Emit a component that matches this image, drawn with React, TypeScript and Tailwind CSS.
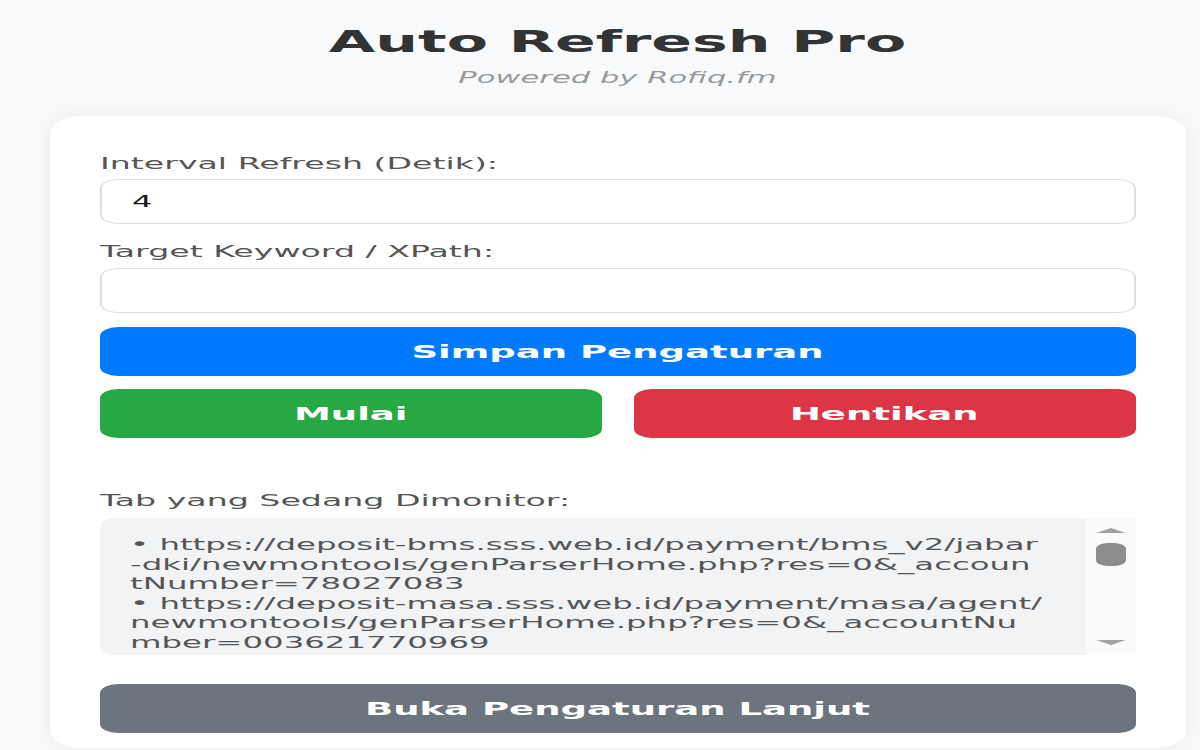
import React from "react";

// each monitored tab, broken into the rows the list box shows
const monitoredTabs = [
  [
    "https://deposit-bms.sss.web.id/payment/bms_v2/jabar",
    "-dki/newmontools/genParserHome.php?res=0&_accoun",
    "tNumber=78027083",
  ],
  [
    "https://deposit-masa.sss.web.id/payment/masa/agent/",
    "newmontools/genParserHome.php?res=0&_accountNu",
    "mber=003621770969",
  ],
];

const font = { fontFamily: '"DejaVu Sans", Verdana, sans-serif' };

function Label({ children }: { children: React.ReactNode }) {
  return <label className="block text-[16.6px] leading-[20px] text-[#555]">{children}</label>;
}

function ScrollTrack() {
  return (
    <div className="w-[25px] shrink-0 bg-[#fafafa] flex flex-col items-center pt-[10px] pb-[10px]">
      <svg width="15" height="5" viewBox="0 0 15 5">
        <path d="M7.5 0 L15 5 L0 5 Z" fill="#a3a3a3" />
      </svg>
      <div className="mt-[10px] w-[15px] h-[23px] rounded-[6px] bg-[#8c8c8c]" />
      <div className="flex-1" />
      <svg width="15" height="5" viewBox="0 0 15 5">
        <path d="M0 0 L15 0 L7.5 5 Z" fill="#a3a3a3" />
      </svg>
    </div>
  );
}

export default function App() {
  return (
    <div className="w-full h-[750px] overflow-hidden bg-[#f8f9fa]" style={font}>
      {/* popup is laid out at 600px and stretched across the window */}
      <div className="w-[600px] origin-top-left scale-x-[2] pl-[25px] pr-[7.5px]">
        <div className="pt-[24px] text-center">
          <h1 className="text-[30px] leading-[36px] font-bold text-[#333]">Auto Refresh Pro</h1>
          <p className="mt-[8px] text-[15.3px] leading-[20px] italic text-[#999]">Powered by Rofiq.fm</p>
        </div>

        <div className="mt-[28px] bg-white rounded-2xl shadow-[0_0_14px_rgba(0,0,0,0.06)] px-[25px] pt-[38px] pb-[15px]">
          <Label>Interval Refresh (Detik):</Label>
          <input
            className="mt-[5px] block w-full h-[45px] rounded-[9px] border border-[#dedede] bg-white pl-[15px] text-[16px] text-[#1a1a1a] outline-none"
            defaultValue="4"
          />

          <div className="mt-[18px]">
            <Label>Target Keyword / XPath:</Label>
          </div>
          <input className="mt-[6px] block w-full h-[45px] rounded-[9px] border border-[#dedede] bg-white pl-[15px] text-[16px] text-[#1a1a1a] outline-none" />

          <button className="mt-[14px] block w-full h-[49px] rounded-[9px] bg-[#007bff] text-white text-[18.5px] font-bold">
            Simpan Pengaturan
          </button>

          <div className="mt-[13px] flex gap-[16px]">
            <button className="flex-1 h-[49px] rounded-[9px] bg-[#28a745] text-white text-[18.5px] font-bold">Mulai</button>
            <button className="flex-1 h-[49px] rounded-[9px] bg-[#dc3545] text-white text-[18.5px] font-bold">Hentikan</button>
          </div>

          <div className="mt-[53px]">
            <Label>Tab yang Sedang Dimonitor:</Label>
          </div>
          <div className="mt-[7px] flex h-[137px] rounded-l-[8px] overflow-hidden">
            <div className="flex-1 bg-[#f1f3f5] pl-[15px] pt-[17px] overflow-hidden">
              <div className="text-[16.2px] leading-[19.6px] text-[#555] whitespace-nowrap">
                {monitoredTabs.map((rows) => (
                  <div key={rows[0]}>
                    {rows.map((row, i) => (
                      <div key={row}>{i === 0 ? `• ${row}` : row}</div>
                    ))}
                  </div>
                ))}
              </div>
            </div>
            <ScrollTrack />
          </div>

          <button className="mt-[29px] block w-full h-[49px] rounded-[9px] bg-[#6c757d] text-white text-[18.5px] font-bold">
            Buka Pengaturan Lanjut
          </button>
        </div>
      </div>
    </div>
  );
}
